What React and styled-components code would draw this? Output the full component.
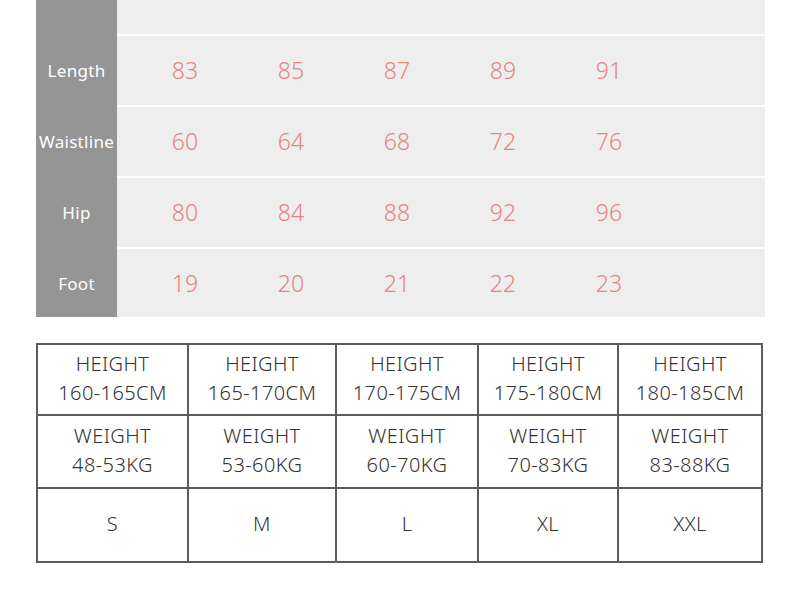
import React from 'react'
import styled, { createGlobalStyle } from 'styled-components'

const GlobalStyle = createGlobalStyle`
    html, body {
        margin: 0;
        padding: 0;
        background: #ffffff;
        font-family: "Noto Sans", "Open Sans", sans-serif;
    }
`

const measures = [
    { label: 'Length', values: [83, 85, 87, 89, 91] },
    { label: 'Waistline', values: [60, 64, 68, 72, 76] },
    { label: 'Hip', values: [80, 84, 88, 92, 96] },
    { label: 'Foot', values: [19, 20, 21, 22, 23] },
]

const sizes = [
    { height: '160-165CM', weight: '48-53KG', size: 'S' },
    { height: '165-170CM', weight: '53-60KG', size: 'M' },
    { height: '170-175CM', weight: '60-70KG', size: 'L' },
    { height: '175-180CM', weight: '70-83KG', size: 'XL' },
    { height: '180-185CM', weight: '83-88KG', size: 'XXL' },
]

export default function App() {
    return (
        <Page>
            <GlobalStyle />
            <Chart>
                <ChartRow $height={34} $first>
                    <Label />
                    <Values />
                </ChartRow>
                {measures.map((m, i) => (
                    <ChartRow key={m.label} $height={i === measures.length - 1 ? 68 : 69}>
                        <Label>{m.label}</Label>
                        <Values>
                            {m.values.map((v) => (
                                <Num key={v}>{v}</Num>
                            ))}
                        </Values>
                    </ChartRow>
                ))}
            </Chart>

            <SizeTable>
                <colgroup>
                    <col style={{ width: 151 }} />
                    <col style={{ width: 148 }} />
                    <col style={{ width: 142 }} />
                    <col style={{ width: 140 }} />
                    <col style={{ width: 144 }} />
                </colgroup>
                <tbody>
                    <tr>
                        {sizes.map((s) => (
                            <Cell key={s.height} $height={66}>
                                HEIGHT<br />{s.height}
                            </Cell>
                        ))}
                    </tr>
                    <tr>
                        {sizes.map((s) => (
                            <Cell key={s.weight} $height={68}>
                                WEIGHT<br />{s.weight}
                            </Cell>
                        ))}
                    </tr>
                    <tr>
                        {sizes.map((s) => (
                            <Cell key={s.size} $height={69}>
                                {s.size}
                            </Cell>
                        ))}
                    </tr>
                </tbody>
            </SizeTable>
        </Page>
    )
}

const Page = styled.div`
    width: 800px;
    height: 607px;
    padding: 0 35px 0 36px;
    box-sizing: border-box;
    overflow: hidden;
`

const Chart = styled.div`
    display: flex;
    flex-direction: column;
    width: 729px;
`

const ChartRow = styled.div`
    display: grid;
    grid-template-columns: 81px 1fr;
    height: ${(p) => p.$height + (p.$first ? 0 : 2)}px;
    & > div:last-child {
        border-top: ${(p) => (p.$first ? 'none' : '2px solid #ffffff')};
    }
    & > div:first-child {
        border-top: ${(p) => (p.$first ? 'none' : '2px solid #959595')};
    }
`

const Label = styled.div`
    background: #959595;
    color: #ffffff;
    font-size: 17px;
    display: flex;
    align-items: center;
    justify-content: center;
    letter-spacing: 0.3px;
`

const Values = styled.div`
    background: #eeeeee;
    display: grid;
    grid-template-columns: repeat(5, 106px);
    padding-left: 15px;
    align-items: center;
`

const Num = styled.div`
    text-align: center;
    color: #e3857f;
    font-size: 23px;
    font-weight: 300;
    padding-bottom: 1px;
`

const SizeTable = styled.table`
    margin-top: 26px;
    width: 726px;
    border-collapse: collapse;
    table-layout: fixed;
    color: #333333;
`

const Cell = styled.td`
    height: ${(p) => p.$height}px;
    border: 2px solid #5c5c5c;
    padding: 0 0 3px 0;
    text-align: center;
    vertical-align: middle;
    font-size: 20px;
    font-weight: 300;
    line-height: 29px;
    letter-spacing: 0.4px;
`
